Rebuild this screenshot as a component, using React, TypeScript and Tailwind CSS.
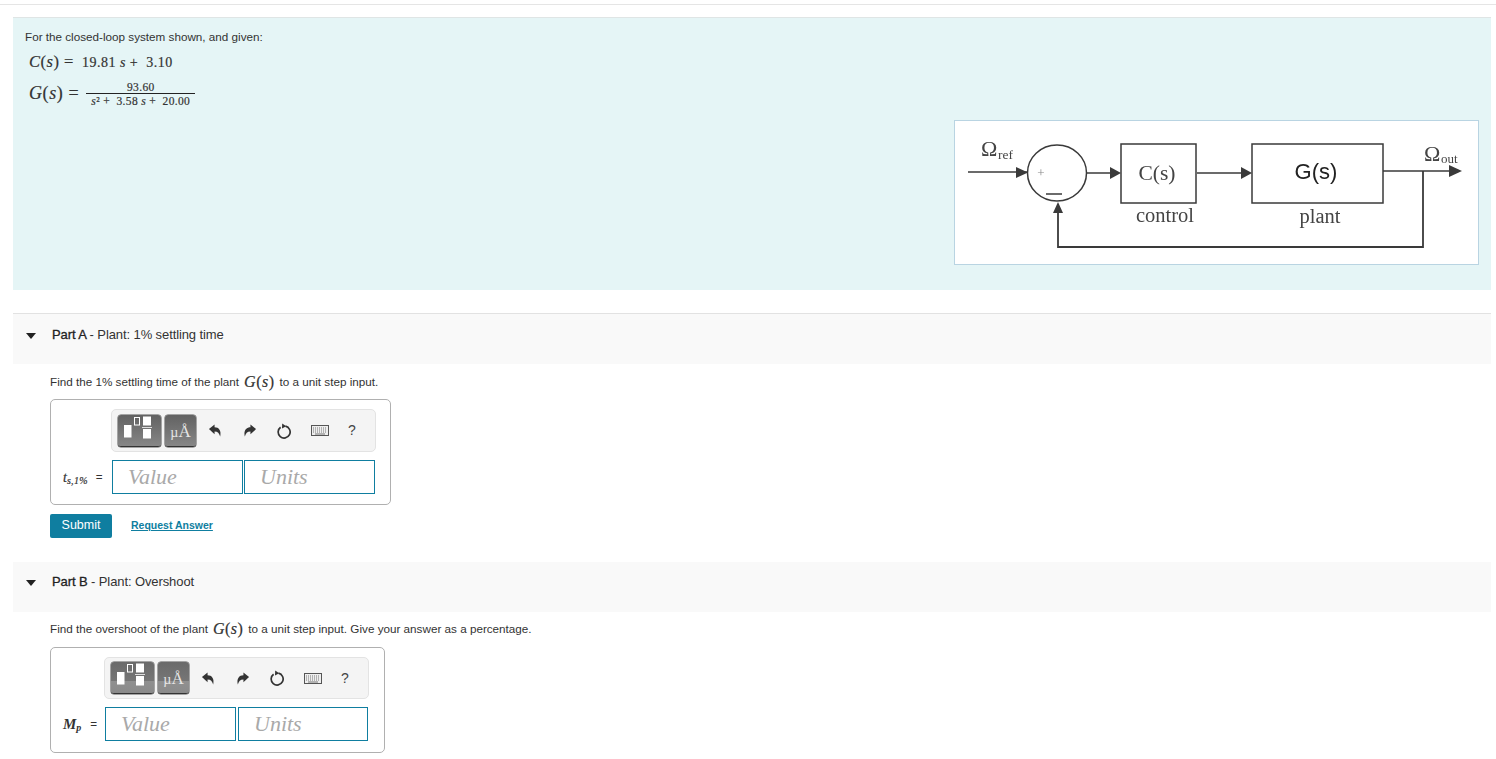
import React from 'react';

const mathFont = "font-['Liberation_Serif',serif]";

const Gs = () => (
  <span className={`${mathFont} text-[16px] tracking-[0.5px] text-[#333] mx-[5px] [-webkit-text-stroke:0.2px_#333]`}>
    <i>G</i>(<i>s</i>)
  </span>
);

const UndoIcon = ({ flip }: { flip?: boolean }) => (
  <svg viewBox="0 0 16 16" className={`w-[15px] h-[15px] ${flip ? '-scale-x-100' : ''}`}>
    <path d="M1 6.5 L7 1.5 V4.5 C11.5 4.5 14.5 8 13 14.5 C12 11 10.5 9 7 9 V12 Z" fill="#333" />
  </svg>
);

const ResetIcon = () => (
  <svg viewBox="0 0 16 16" className="w-[16px] h-[16px]">
    <path d="M9.5 3.2 A6 6 0 1 1 4.6 4.2" fill="none" stroke="#333" strokeWidth="1.7" />
    <path d="M6.2 0.4 L10.2 3.2 L6 5.6 Z" fill="#333" />
  </svg>
);

const KeyboardIcon = () => (
  <svg viewBox="0 0 18 11" className="w-[18px] h-[11px]">
    <rect x="0.5" y="0.5" width="17" height="10" fill="#eee" stroke="#555" />
    <path d="M2 3 H16 M2 5 H16 M2 7 H16" stroke="#777" strokeDasharray="1 1" />
    <path d="M4 9 H14" stroke="#777" />
  </svg>
);

const TemplateGlyph = () => (
  <svg viewBox="1 0 43 31" className="w-[43px] h-[31px]">
    <rect x="7" y="10" width="7.5" height="12.5" fill="#fff" />
    <rect x="17.5" y="2.5" width="5" height="7.5" fill="none" stroke="#fff" />
    <rect x="26" y="1.5" width="8" height="9" fill="#fff" />
    <rect x="25" y="12" width="10" height="1" fill="#ddd" />
    <rect x="26" y="14" width="8" height="9.5" fill="#fff" />
  </svg>
);

const Toolbar: React.FC<{ heightClass: string; buttonBg: string }> = ({ heightClass, buttonBg }) => (
  <div className={`${heightClass} w-[265px] -ml-[1px] flex items-center pl-[6px] bg-[#f4f4f4] border border-[#e3e3e3] rounded-[5px]`}>
    <div className={`w-[43px] h-[32px] rounded-[3px] ${buttonBg} border-b border-[#333] shadow-[0_0_0_0.5px_#555]`}>
      <TemplateGlyph />
    </div>
    <div className={`w-[31px] h-[32px] ml-[4px] rounded-[3px] ${buttonBg} border-b border-[#333] shadow-[0_0_0_0.5px_#555] flex items-end justify-center pb-[6px]`}>
      <span className={`${mathFont} text-[14px] text-[#e6e6e6] leading-none`}>µ</span>
      <span className={`${mathFont} text-[17px] text-[#e6e6e6] leading-none`}>Å</span>
    </div>
    <div className="flex items-center gap-[19px] ml-[12px]">
      <UndoIcon />
      <UndoIcon flip />
      <ResetIcon />
      <KeyboardIcon />
      <span className="font-['Liberation_Sans',sans-serif] text-[14px] text-[#444]">?</span>
    </div>
  </div>
);

const Field: React.FC<{ text: string; className: string }> = ({ text, className }) => (
  <div className={`${className} h-[34px] border border-[#0f7ea0] flex items-center pl-[15px] pb-[2px] ${mathFont} italic text-[22px] text-[#a9a9a9] bg-white`}>
    {text}
  </div>
);

const AnswerBox: React.FC<{
  widthClass: string;
  labelClass: string;
  toolbarHeight: string;
  buttonBg: string;
  fieldGap: string;
  secondClass: string;
  label: React.ReactNode;
}> = ({ widthClass, labelClass, toolbarHeight, buttonBg, fieldGap, secondClass, label }) => (
  <div className={`${widthClass} h-[106px] border border-[#b0b0b0] rounded-[5px] pt-[9px] pl-[12px]`}>
    <div className="flex">
      <div className={labelClass} />
      <Toolbar heightClass={toolbarHeight} buttonBg={buttonBg} />
    </div>
    <div className="flex items-center mt-[8px]">
      <div className={`${labelClass} flex items-center text-[#333]`}>{label}</div>
      <div className={`flex ${fieldGap}`}>
        <Field text="Value" className="w-[131px]" />
        <Field text="Units" className={secondClass} />
      </div>
    </div>
  </div>
);

const PartHeader: React.FC<{ part: string; title: string; border?: boolean; className: string }> = ({
  part,
  title,
  border,
  className,
}) => (
  <div className={`${className} ml-[13px] mr-[5px] bg-[#f9f9f9] flex items-start pl-[13px] ${border ? 'border-t border-[#e2e2e2]' : ''}`}>
    <span className="w-0 h-0 mt-[6px] border-l-[5px] border-r-[5px] border-t-[6px] border-l-transparent border-r-transparent border-t-[#222]" />
    <div className="ml-[16px] text-[13px] leading-[15px] text-[#333] tracking-[-0.1px]">
      <b className="font-normal text-[#222] [-webkit-text-stroke:0.3px_#222]">{part}</b> - {title}
    </div>
  </div>
);

const BlockDiagram = () => (
  <svg viewBox="955 121 523 143" className="w-[523px] h-[143px] block blur-[0.3px]">
    <g stroke="#3a3a3a" strokeWidth="1.5" fill="none">
      <path d="M968 172 H1028" />
      <ellipse cx="1057" cy="173" rx="29.5" ry="28" />
      <path d="M1087 173 H1112" />
      <rect x="1121" y="144" width="75" height="59" />
      <path d="M1197 173 H1243" />
      <rect x="1252" y="144" width="131" height="59" />
      <path d="M1383 171 H1451" />
      <path d="M1423 171 V247 H1058 V212" strokeWidth="1.8" />
      <path d="M1046 194 H1062" />
    </g>
    <g fill="#3a3a3a">
      <path d="M1016 167 L1028 172.5 L1016 178 Z" />
      <path d="M1110 167 L1121 173 L1110 179 Z" />
      <path d="M1241 167 L1252 173 L1241 179 Z" />
      <path d="M1449 165 L1462 171 L1449 177 Z" />
      <path d="M1058 202 L1053 213 L1063 213 Z" />
    </g>
    <g className="font-['Liberation_Serif',serif]" fill="#444">
      <text x="981" y="156" fontSize="22">Ω</text>
      <text x="998" y="159" fontSize="13.5">ref</text>
      <text x="1424" y="161" fontSize="22">Ω</text>
      <text x="1441" y="163" fontSize="13">out</text>
      <text x="1157" y="180" fontSize="21.5" textAnchor="middle">C(s)</text>
      <text x="1165" y="222" fontSize="20.5" textAnchor="middle">control</text>
      <text x="1320" y="223" fontSize="20.5" textAnchor="middle">plant</text>
      <text x="1041" y="177" fontSize="13" fill="#888" textAnchor="middle">+</text>
    </g>
    <text x="1316" y="179" fontSize="22" textAnchor="middle" fill="#222" className="font-['Liberation_Sans',sans-serif]">
      G(s)
    </text>
  </svg>
);

export default function App() {
  return (
    <div className="w-[1496px] h-[759px] overflow-hidden bg-white font-['Liberation_Sans',Arial,sans-serif] text-[11.7px] text-[#333] pt-[4px]">
      <div className="border-t border-[#e5e5e5]" />

      {/* intro panel */}
      <div className="ml-[13px] mr-[5px] mt-[12px] h-[273px] bg-[#e5f5f6] border-t border-[#dfe5e5] pt-[12px] pl-[12px] relative">
        <p className="leading-[14px]">For the closed-loop system shown, and given:</p>
        <div className={`${mathFont} flex items-center h-[20px] mt-[8px] ml-[4px] text-[14px] text-[#333] tracking-[0.5px] [-webkit-text-stroke:0.2px_#333]`}>
          <span className="text-[16.5px]">
            <i>C</i>(<i>s</i>) =
          </span>
          <span className="ml-[8px]">
            19.81 <i>s</i> + &nbsp;3.10
          </span>
        </div>
        <div className={`${mathFont} flex items-center mt-[6px] ml-[4px] text-[#333] [-webkit-text-stroke:0.2px_#333]`}>
          <span className="text-[18px] tracking-[0.6px]">
            <i>G</i>(<i>s</i>) =
          </span>
          <div className="ml-[7px] flex flex-col items-center w-[109px] text-[11.5px] tracking-[0.35px]">
            <span className="leading-[12px] pt-[3px]">93.60</span>
            <span className="w-full border-t border-[#222]" />
            <span className="leading-[15px]">
              <i>s</i>² + &nbsp;3.58 <i>s</i> + &nbsp;20.00
            </span>
          </div>
        </div>
        <div className="absolute left-[941px] top-[102px] bg-white border border-[#b9d4e2]">
          <BlockDiagram />
        </div>
      </div>

      <PartHeader part="Part A" title="Plant: 1% settling time" border className="mt-[23px] h-[51px] pt-[13px]" />
      <div className="pl-[50px]">
        <div className="flex items-center h-[17px] mt-[9px]">
          Find the 1% settling time of the plant <Gs /> to a unit step input.
        </div>
        <div className="mt-[9px]">
          <AnswerBox
            widthClass="w-[341px]"
            labelClass="w-[49px] shrink-0"
            toolbarHeight="h-[43px]"
            buttonBg="bg-gradient-to-b from-[#626262] to-[#868686]"
            fieldGap="gap-[1px]"
            secondClass="w-[131px]"
            label={
              <>
                <span className={`${mathFont} italic text-[14px] [-webkit-text-stroke:0.2px_#333]`}>
                  t<sub className="text-[10px] tracking-[0.3px]">s,1%</sub>
                </span>
                <span className="ml-[8px]">=</span>
              </>
            }
          />
        </div>
        <div className="flex items-center mt-[9px]">
          <div className="w-[62px] h-[24px] pb-[1px] bg-[#0f7ea0] rounded-[2px] text-white flex items-center justify-center text-[12.5px]">
            Submit
          </div>
          <span className="ml-[19px] pb-[1px] text-[10.5px] font-bold underline text-[#0f7ea0]">Request Answer</span>
        </div>
      </div>

      <PartHeader part="Part B" title="Plant: Overshoot" className="mt-[24px] h-[50px] pt-[12px]" />
      <div className="pl-[50px]">
        <div className="flex items-center h-[17px] mt-[8px]">
          Find the overshoot of the plant <Gs /> to a unit step input. Give your answer as a percentage.
        </div>
        <div className="mt-[10px]">
          <AnswerBox
            widthClass="w-[335px]"
            labelClass="w-[42px] shrink-0"
            toolbarHeight="h-[42px]"
            buttonBg="bg-[linear-gradient(#6a6a6a_0%,#767676_62%,#909090_62%,#8a8a8a_100%)]"
            fieldGap="gap-[2px]"
            secondClass="w-[130px]"
            label={
              <>
                <span className={`${mathFont} italic text-[15px] font-bold`}>
                  M<sub className="text-[10px]">p</sub>
                </span>
                <span className="ml-[9px]">=</span>
              </>
            }
          />
        </div>
      </div>
    </div>
  );
}
